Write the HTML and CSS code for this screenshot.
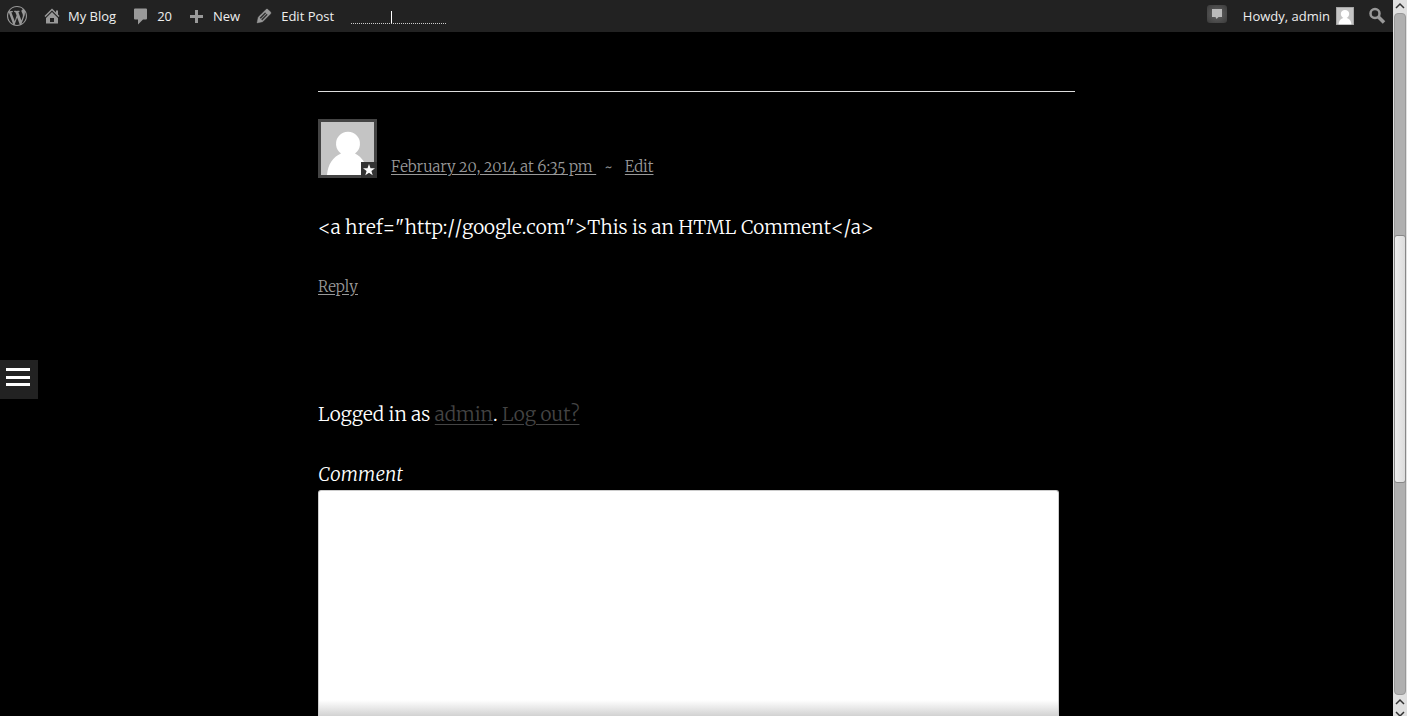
FILE: index.html
```html
<!DOCTYPE html>
<html lang="en">
<head>
<meta charset="utf-8">
<title>My Blog</title>
<link rel="stylesheet" href="styles.css">
</head>
<body>
<div class="view">
  <header class="adminbar">
    <nav class="bar-group" aria-label="Toolbar">
      <a class="bar-item" href="#" aria-label="About WordPress"><svg class="icon" viewBox="0 0 20 20" width="20" height="20"><path d="M20 10c0-5.51-4.49-10-10-10S0 4.49 0 10s4.490 10 10 10 10-4.490 10-10zM7.780 15.370L4.370 6.220c.55-.02 1.170-.08 1.170-.08.5-.06.440-1.130-.06-1.110 0 0-1.450.11-2.370.11-.18 0-.37 0-.58-.01C4.120 2.690 6.870 1.110 10 1.110c2.330 0 4.450.87 6.050 2.340-.68-.11-1.650.39-1.650 1.580 0 .74.45 1.360.9 2.100.35.61.55 1.360.55 2.460 0 1.490-1.400 5-1.400 5l-3.030-8.370c.54-.02.82-.17.82-.17.5-.05.44-1.250-.06-1.220 0 0-1.440.12-2.380.12-.87 0-2.330-.12-2.330-.12-.5-.03-.56 1.200-.06 1.220l.92.08 1.260 3.410zM17.410 10c.24-.64.740-1.870.430-4.250.7 1.290 1.050 2.710 1.050 4.250 0 3.290-1.730 6.240-4.400 7.780.97-2.590 1.940-5.200 2.920-7.780zM6.100 18.090C3.120 16.650 1.110 13.530 1.110 10c0-1.300.23-2.480.72-3.590C3.250 10.300 4.670 14.200 6.100 18.090zM10.130 11.460l2.580 6.980c-.86.29-1.760.45-2.710.45-.79 0-1.570-.11-2.290-.33.81-2.380 1.620-4.740 2.420-7.100z"/></svg></a>
      <a class="bar-item" href="#"><svg class="icon" viewBox="0 0 20 20" width="20" height="20"><path d="M16 8.500l1.530 1.530-1.060 1.060L10 4.600l-6.470 6.490-1.060-1.060L10 2.500l4 4v-2h2v4zM10 6l6 5.900V17.500H4v-5.600zm2 10v-4H8v4z" fill-rule="evenodd"/></svg><span>My Blog</span></a>
      <a class="bar-item" href="#"><svg class="icon" viewBox="0 0 20 20" width="20" height="20"><path d="M4 2.500h11q1 0 1 1v9q0 1-1 1h-3l-5 5v-5H4q-1 0-1-1v-9q0-1 1-1z"/></svg><span>20</span></a>
      <a class="bar-item" href="#"><svg class="icon" viewBox="0 0 20 20" width="20" height="20"><path d="M16 9v3h-5v5H8v-5H3V9h5V4h3v5z"/></svg><span>New</span></a>
      <a class="bar-item" href="#"><svg class="icon" viewBox="0 0 20 20" width="20" height="20"><path d="M12.890 3.390l2.710 2.720c.46.46.42 1.240.03 1.640l-8.010 8.020-5.560 1.160 1.160-5.580s7.600-7.630 7.990-8.030c.39-.39 1.220-.39 1.680.07zm-2.730 2.790l-5.590 5.610 1.110 1.110 5.540-5.650zm-2.970 8.230l5.580-5.600-1.070-1.080-5.590 5.600z" stroke="#999" stroke-width=".4"/></svg><span>Edit Post</span></a>
      <svg class="stats" viewBox="0 0 95 24" width="95" height="24" role="img" aria-label="Views"><path d="M0 19.500H95" stroke="#ccc" stroke-dasharray="1 1"/><path d="M40.500 7V19" stroke="#fff"/></svg>
    </nav>
    <div class="bar-group">
      <a class="notes" href="#" aria-label="Notifications"><svg viewBox="0 0 20 18" width="20" height="18"><path d="M5 4h10v8h-3.500L9.500 14 8.500 12H5z" fill="#bbb"/></svg></a>
      <a class="bar-item account" href="#"><span>Howdy, admin</span><svg class="mini" viewBox="0 0 56 56" width="18" height="18"><path fill="#c4c4c4" d="M0 0h56v56H0z"/><circle cx="28" cy="22" r="13" fill="#fff"/><path d="M8 56c0-30 40-30 40 0z" fill="#fff"/><path d="M1 1h54v54H1z" fill="none" stroke="#888" stroke-width="2"/></svg></a>
      <button class="search" type="button" aria-label="Search"><svg class="icon" viewBox="0 0 20 20" width="20" height="20"><circle cx="8" cy="7.500" r="4.500" fill="none" stroke="#999" stroke-width="2.500"/><path d="M11 10.500l6 6" stroke="#999" stroke-width="3.500"/></svg></button>
    </div>
  </header>
  <main class="content">
    <article class="comment">
      <header class="meta">
        <div class="avatar"><svg viewBox="0 0 53 53" width="53" height="53"><path fill="#c4c4c4" d="M0 0h53v53H0z"/><path d="M6 53C7 42 12 35 20 31.500a12 12 0 1 1 14 0C41 35 46 42 47 53z" fill="#fff"/></svg><svg class="star" viewBox="0 0 16 16" width="16" height="16"><path fill="#333" d="M0 0h16v16H0z"/><path fill="#fff" d="M8 2l1.500 4.200H14l-3.600 2.700 1.300 4.400L8 10.700l-3.700 2.600 1.300-4.400L2 6.200h4.500z"/></svg></div>
        <a class="date" href="#">February 20, 2014 at 6:35 pm&nbsp;</a><span class="tilde">~</span><a href="#">Edit</a>
      </header>
      <p class="body">&lt;a href="http://google.com"&gt;This is an HTML Comment&lt;/a&gt;</p>
      <a class="reply" href="#">Reply</a>
    </article>
    <form class="respond">
      <p class="logged">Logged in as <a href="#">admin</a>. <a href="#">Log out?</a></p>
      <label class="label" for="comment">Comment</label>
      <textarea class="field" id="comment"></textarea>
    </form>
  </main>
  <button class="menu" type="button" aria-label="Menu"><svg viewBox="0 0 38 39" width="38" height="39"><path d="M6 8h24v3H6zM6 16h24v3H6zM6 23h24v3H6z" fill="#fff"/></svg></button>
</div>
<div class="scrollbar" aria-hidden="true">
  <svg class="arrow" viewBox="0 0 14 13" width="14" height="13"><path d="M3 8L7 4 11 8" fill="none" stroke="#333" stroke-width="1.500"/></svg>
  <div class="track"><div class="thumb"></div></div>
  <svg class="arrow" viewBox="0 0 14 12" width="14" height="12"><path d="M3 9L7 5 11 9" fill="none" stroke="#333" stroke-width="1.500"/></svg>
  <svg class="arrow" viewBox="0 0 14 9" width="14" height="9"><path d="M3 5L7 9 11 5" fill="none" stroke="#333" stroke-width="1.500"/></svg>
</div>
</body>
</html>
```
FILE: styles.css
```css
* { box-sizing: border-box; }
body {
  margin: 0;
  height: 100vh;
  display: flex;
  overflow: hidden;
  background: #000;
  color: #fff;
  font-family: Merriweather, "DejaVu Serif Condensed", "DejaVu Serif", serif;
  font-size: 19px;
  font-weight: 300;
  font-kerning: none;
  font-variant-numeric: oldstyle-nums;
  line-height: 30px;
}
svg { display: block; flex: none; }
button { padding: 0; border: 0; cursor: pointer; }
.view { flex: 1; min-width: 0; overflow: hidden; position: relative; }

.adminbar {
  height: 32px;
  display: flex;
  justify-content: space-between;
  background: #222;
  font: 13px/32px "Open Sans", sans-serif;
}
.bar-group { display: flex; align-items: center; }
.bar-item {
  display: flex;
  align-items: center;
  gap: 6px;
  padding: 0 7px 0 8px;
  color: #eee;
  text-decoration: none;
}
.bar-item:first-child { padding: 0 7px; }
.icon { fill: #999; }
.stats { margin-left: 10px; }
.notes {
  margin: 0 8px 4px 0;
  border-radius: 3px;
  background: radial-gradient(#666, #3a3a3a);
}
.search { padding: 0 6px; background: none; }

.content {
  width: 757px;
  max-width: 100%;
  margin: 59px auto 0;
}
.comment { border-top: 1px solid #ddd; padding-top: 27px; }
.meta {
  display: flex;
  align-items: flex-end;
  font-size: 15px;
  line-height: 22px;
  color: #999;
}
.meta a, .reply { color: #999; text-underline-offset: 2px; }
.avatar { position: relative; border: 3px solid #444; margin-right: 14px; }
.star { position: absolute; right: -3px; bottom: -3px; }
.tilde { margin: 0 12px 0 8px; }
.body { margin: 34px 0 30px; }
.reply { display: block; width: max-content; font-size: 15px; }
.respond { padding-top: 97px; }
.logged { margin: 0 0 30px; }
.logged a { color: #444; text-underline-offset: 3px; }
.label { display: block; font-style: italic; }
.field {
  display: block;
  width: calc(100% - 16px);
  height: 228px;
  margin-top: 1px;
  padding: 8px;
  border: 1px solid #ccc;
  border-bottom: 0;
  border-radius: 3px 3px 0 0;
  resize: none;
  background: linear-gradient(#fff calc(100% - 18px), #ccc);
}
.menu { position: absolute; left: 0; top: calc(50% + 2px); background: #222; }

.scrollbar {
  width: 14px;
  flex: none;
  display: flex;
  flex-direction: column;
  background: #e0e0e0;
}
.track {
  flex: 1;
  margin: 0 1px;
  padding-top: 221px;
  border: 1px solid #999;
  border-radius: 4px;
  background: #b0b0b0;
}
.thumb {
  height: 248px;
  margin: 0 -1px;
  border: 1px solid #888;
  border-radius: 3px;
  background: linear-gradient(90deg, #eee, #dcdcdc);
}
```
